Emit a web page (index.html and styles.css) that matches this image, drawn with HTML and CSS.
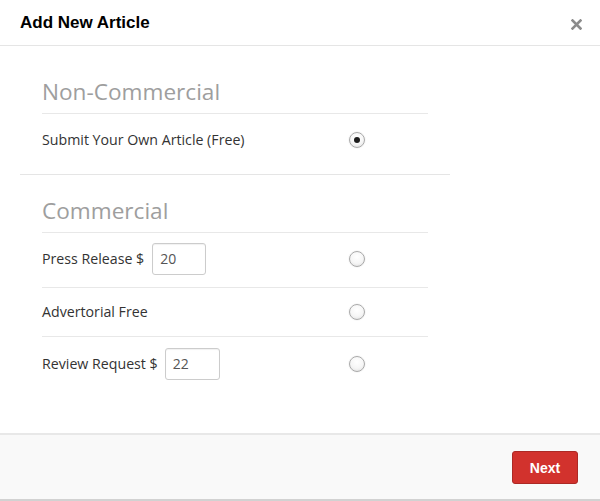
FILE: index.html
```html
<!DOCTYPE html>
<html>
<head>
<meta charset="utf-8">
<link rel="stylesheet" href="styles.css">
</head>
<body>
<div class="modal">
  <div class="modal-header">
    <h4 class="title">Add New Article</h4>
    <span class="close"><svg width="11" height="11" viewBox="0 0 11 11"><path d="M1.5 1.5 L9.5 9.5 M9.5 1.5 L1.5 9.5" stroke="#8c8c8c" stroke-width="2.6" stroke-linecap="square"/></svg></span>
  </div>
  <div class="modal-body">
    <div class="panel">
      <div class="section first">
        <div class="heading">Non-Commercial</div>
        <div class="row row-plain">
          <div class="label">Submit Your Own Article (Free)</div>
          <span class="radio checked"></span>
        </div>
      </div>
      <div class="section second">
        <div class="heading">Commercial</div>
        <div class="row row-input">
          <div class="label">Press Release $ <span class="input input-a">20</span></div>
          <span class="radio"></span>
        </div>
        <div class="row row-plain2 bordered">
          <div class="label">Advertorial Free</div>
          <span class="radio"></span>
        </div>
        <div class="row row-input2">
          <div class="label">Review Request $ <span class="input input-b">22</span></div>
          <span class="radio"></span>
        </div>
      </div>
    </div>
  </div>
  <div class="modal-footer">
    <button class="btn-next">Next</button>
  </div>
</div>
</body>
</html>
```

FILE: styles.css
```css
html, body {
  margin: 0;
  padding: 0;
  background: #ffffff;
}
.modal {
  width: 600px;
  height: 501px;
  display: flex;
  flex-direction: column;
  font-family: "Open Sans", "Liberation Sans", sans-serif;
  color: #333333;
}
.modal-header {
  height: 45px;
  border-bottom: 1px solid #e5e5e5;
  display: flex;
  align-items: center;
  justify-content: space-between;
  padding: 0 18px 0 20px;
  box-sizing: content-box;
  flex: none;
}
.title {
  margin: 0;
  font-family: "Liberation Sans", Arial, sans-serif;
  font-weight: bold;
  font-size: 17px;
  color: #000;
  line-height: 20px;
  padding-top: 1px;
}
.close {
  display: flex;
  width: 11px;
  height: 11px;
  margin-top: 3px;
}
.modal-body {
  flex: 1;
  padding: 31px 0 0 20px;
}
.panel {
  width: 430px;
}
.section {
  padding: 0 22px;
}
.section.first {
  border-bottom: 1px solid #e5e5e5;
  padding-bottom: 8px;
}
.section.second {
  padding-top: 21px;
}
.heading {
  font-size: 22.6px;
  line-height: 30px;
  color: #9e9e9e;
  padding-bottom: 6px;
  border-bottom: 1px solid #e8e8e8;
}
.row {
  display: grid;
  grid-template-columns: 307px 16px;
  align-items: center;
}
.row-plain {
  height: 52px;
}
.row-input {
  padding: 10px 0 12px;
  border-bottom: 1px solid #e8e8e8;
}
.row-plain2 {
  height: 48px;
}
.bordered {
  border-bottom: 1px solid #e8e8e8;
}
.row-input2 {
  padding: 11px 0 10px;
}
.label {
  font-size: 14.2px;
  line-height: 20px;
  color: #333;
  display: flex;
  align-items: center;
  white-space: nowrap;
}
.input {
  display: inline-block;
  box-sizing: border-box;
  height: 32px;
  border: 1px solid #cccccc;
  border-radius: 3px;
  padding: 0 7px;
  line-height: 30px;
  color: #555;
  font-size: 14px;
  box-shadow: inset 0 1px 1px rgba(0,0,0,0.06);
}
.input-a {
  width: 54px;
  margin-left: 8px;
}
.input-b {
  width: 55px;
  margin-left: 7px;
}
.radio {
  width: 16px;
  height: 16px;
  box-sizing: border-box;
  border-radius: 50%;
  border: 1px solid #a9a9a9;
  background: radial-gradient(circle at 50% 35%, #ffffff 0%, #f6f6f6 55%, #dcdcdc 100%);
  box-shadow: 0 0 0 1px rgba(0,0,0,0.03);
  display: flex;
  align-items: center;
  justify-content: center;
}
.radio.checked::after {
  content: "";
  width: 6px;
  height: 6px;
  border-radius: 50%;
  background: #1c1c1c;
}
.modal-footer {
  height: 48px;
  flex: none;
  border-top: 2px solid #e8e8e8;
  border-bottom: 2px solid #d2d2d2;
  background: #f9f9f9;
  display: flex;
  justify-content: flex-end;
  align-items: flex-start;
  padding: 16px 22px 0 0;
  box-sizing: content-box;
}
.btn-next {
  width: 66px;
  height: 33px;
  border: 1px solid #ac2925;
  border-radius: 3px;
  background: #d2322d;
  color: #ffffff;
  font-family: "Liberation Sans", Arial, sans-serif;
  font-weight: bold;
  font-size: 14px;
  padding: 0;
}
```
